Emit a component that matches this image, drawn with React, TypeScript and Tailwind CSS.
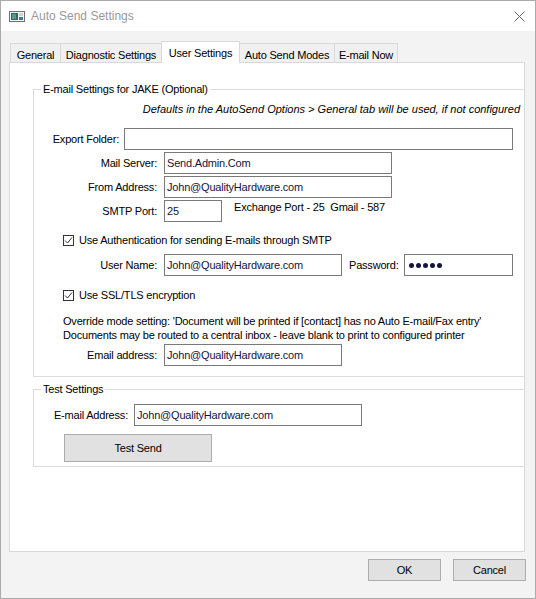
import React from "react";

const font = { fontFamily: '"Liberation Sans", Arial, sans-serif' };

const Field = ({ value, className }: { value: string; className: string }) => (
  <input
    readOnly
    value={value}
    className={`h-[22px] border border-[#7a7a7a] bg-white px-[2px] text-[11px] tracking-[-0.2px] text-[#14143c] outline-none ${className}`}
  />
);

const Check = ({ label }: { label: string }) => (
  <div className="ml-[29px] flex h-[14px] items-center">
    <span className="flex h-[11px] w-[11px] items-center justify-center border border-[#333333] bg-white">
      <svg width="9" height="9" viewBox="0 0 9 9">
        <path d="M1 4.5 L3.5 7 L8 1.5" fill="none" stroke="#333333" strokeWidth="1" />
      </svg>
    </span>
    <span className="ml-[5px]">{label}</span>
  </div>
);

const Tab = ({ label, className }: { label: string; className: string }) => (
  <div className={`flex items-center justify-center border-[#d9d9d9] ${className}`}>{label}</div>
);

export default function App() {
  return (
    <div
      className="flex h-[599px] w-[536px] flex-col border border-[#aaaaaa] bg-[#f3f3f3] text-[11px] leading-[14px] tracking-[-0.2px] text-black"
      style={font}
    >
      {/* title bar */}
      <div className="flex h-[30px] items-center bg-white">
        <svg className="ml-[8px]" width="16" height="11" viewBox="0 0 16 11">
          <rect x="0.5" y="0.5" width="15" height="10" fill="#f4f4f4" stroke="#707070" />
          <rect x="2" y="2" width="7" height="7" fill="#2f6a5e" />
          <rect x="3" y="3" width="4" height="5" fill="#5a9a8a" />
          <rect x="10" y="2" width="4" height="3" fill="#d0d0d0" />
          <rect x="10" y="6" width="4" height="3" fill="#4a6fa0" />
        </svg>
        <span className="ml-[6px] text-[12px] tracking-normal text-[#999999]">Auto Send Settings</span>
        <svg className="ml-auto mr-[10px]" width="11" height="11" viewBox="0 0 11 11">
          <path d="M0.5 0.5 L10.5 10.5 M10.5 0.5 L0.5 10.5" stroke="#666666" strokeWidth="1" />
        </svg>
      </div>

      {/* tabs */}
      <div className="mt-[10px] flex h-[21px] items-end pl-[9px]">
        <Tab label="General" className="h-[19px] w-[50px] border-l border-t bg-[#f0f0f0] pt-[3px]" />
        <Tab label="Diagnostic Settings" className="h-[19px] w-[101px] border-l border-t bg-[#f0f0f0] pt-[3px]" />
        <Tab
          label="User Settings"
          className="relative z-10 -mb-px h-[22px] w-[79px] border-l border-r border-t bg-white pt-[1px]"
        />
        <Tab label="Auto Send Modes" className="h-[19px] w-[94px] border-t bg-[#f0f0f0] pt-[3px]" />
        <Tab label="E-mail Now" className="h-[19px] w-[64px] border-l border-r border-t bg-[#f0f0f0] pt-[3px]" />
      </div>

      {/* tab panel */}
      <div className="ml-[8px] flex h-[490px] w-[516px] flex-col border border-[#d9d9d9] bg-white">
        <fieldset className="ml-[23px] mt-[19px] flex flex-col border border-r-0 border-[#dcdcdc] pb-[10px]">
          <legend className="ml-[7px] px-[2px]">E-mail Settings for JAKE (Optional)</legend>
          <div className="mt-[6px] pr-[4px] text-right italic tracking-normal">
            Defaults in the AutoSend Options &gt; General tab will be used, if not configured
          </div>

          <div className="mt-[12px] flex items-center">
            <span className="w-[85px] text-right">Export Folder:</span>
            <Field value="" className="ml-[5px] w-[389px]" />
          </div>
          <div className="mt-[2px] flex items-center">
            <span className="w-[123px] text-right">Mail Server:</span>
            <Field value="Send.Admin.Com" className="ml-[7px] w-[228px]" />
          </div>
          <div className="mt-[2px] flex items-center">
            <span className="w-[123px] text-right">From Address:</span>
            <Field value="John@QualityHardware.com" className="ml-[7px] w-[228px]" />
          </div>
          <div className="mt-[2px] flex items-start">
            <span className="mt-[4px] w-[123px] text-right">SMTP Port:</span>
            <Field value="25" className="ml-[7px] w-[58px]" />
            <span className="ml-[12px]">Exchange Port - 25&nbsp; Gmail - 587</span>
          </div>

          <div className="mt-[11px]">
            <Check label="Use Authentication for sending E-mails through SMTP" />
          </div>
          <div className="mt-[7px] flex items-center">
            <span className="w-[123px] text-right">User Name:</span>
            <Field value="John@QualityHardware.com" className="ml-[7px] w-[178px]" />
            <span className="ml-[7px] w-[55px]">Password:</span>
            <div className="flex h-[22px] w-[109px] items-center gap-[2px] border border-[#7a7a7a] bg-white pl-[4px]">
              <span className="h-[5px] w-[5px] rounded-full bg-[#14143c]" />
              <span className="h-[5px] w-[5px] rounded-full bg-[#14143c]" />
              <span className="h-[5px] w-[5px] rounded-full bg-[#14143c]" />
              <span className="h-[5px] w-[5px] rounded-full bg-[#14143c]" />
              <span className="h-[5px] w-[5px] rounded-full bg-[#14143c]" />
            </div>
          </div>

          <div className="mt-[12px]">
            <Check label="Use SSL/TLS encryption" />
          </div>
          <div className="ml-[29px] mt-[12px]">
            <div>Override mode setting: &apos;Document will be printed if [contact] has no Auto E-mail/Fax entry&apos;</div>
            <div>Documents may be routed to a central inbox - leave blank to print to configured printer</div>
          </div>
          <div className="mt-[2px] flex items-center">
            <span className="w-[123px] text-right">Email address:</span>
            <Field value="John@QualityHardware.com" className="ml-[7px] w-[178px]" />
          </div>
        </fieldset>

        <fieldset className="ml-[23px] mt-[5px] flex flex-col border border-r-0 border-[#dcdcdc] pb-[4px]">
          <legend className="ml-[7px] px-[2px]">Test Settings</legend>
          <div className="mt-[8px] flex items-center">
            <span className="w-[94px] text-right">E-mail Address:</span>
            <Field value="John@QualityHardware.com" className="ml-[6px] w-[228px]" />
          </div>
          <button className="ml-[30px] mt-[8px] h-[28px] w-[148px] border border-[#adadad] bg-[#e1e1e1]">
            Test Send
          </button>
        </fieldset>
      </div>

      {/* dialog buttons */}
      <div className="mt-[7px] flex justify-end gap-[12px] pr-[9px]">
        <button className="h-[22px] w-[73px] border border-[#adadad] bg-[#e1e1e1]">OK</button>
        <button className="h-[22px] w-[73px] border border-[#adadad] bg-[#e1e1e1]">Cancel</button>
      </div>
    </div>
  );
}
